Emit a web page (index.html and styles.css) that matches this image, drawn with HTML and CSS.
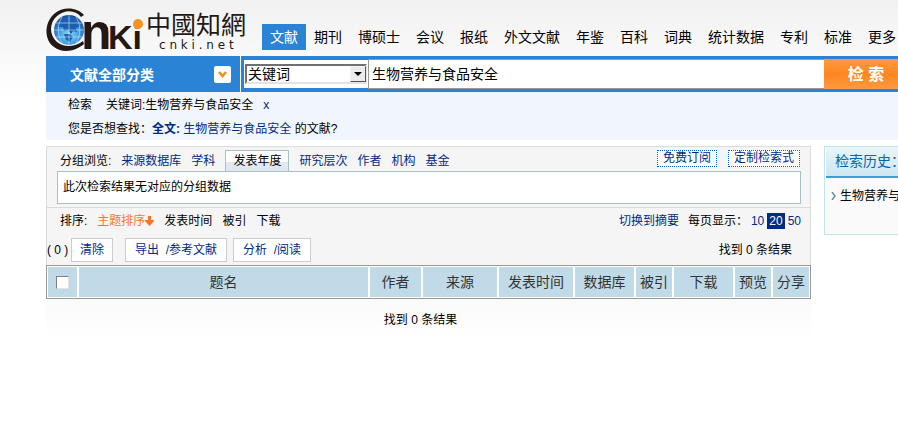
FILE: index.html
```
<!DOCTYPE html>
<html lang="zh-CN">
<head>
    <meta charset="UTF-8">
    <meta name="viewport" content="width=device-width, initial-scale=1.0">
    <title>中国知网 - 文献检索</title>
    <link rel="stylesheet" href="styles.css">
</head>
<body>
    <!-- 顶部 logo 和导航 -->
    <header class="header">
        <a class="logo" href="#" aria-label="中国知网">
            <svg width="202" height="48" viewBox="0 0 202 48">
                <defs>
                    <radialGradient id="globe" cx="0.5" cy="0.65" r="0.65">
                        <stop offset="0" stop-color="#8fdcfb"/>
                        <stop offset="0.5" stop-color="#3f9fe3"/>
                        <stop offset="1" stop-color="#124a9c"/>
                    </radialGradient>
                </defs>
                <path d="M38 8C31 0 17 -1 8 7C-2 16 -2 33 8 40C17 47 30 44 38 37L37 34C29 40 18 41 11 35C3 28 3 16 11 9C19 2 30 3 35 10Z" fill="#231815"/>
                <circle cx="23" cy="23" r="15" fill="url(#globe)"/>
                <path d="M12 17L15 13L20 10L23 13L27 11L32 15L34 19L30 21L31 25L27 24L25 27L22 23L18 24L17 20L13 20ZM18 27L24 27L27 30L24 35L20 33Z" fill="#1c5fb0"/>
                <path d="M8 23H38M10 16H36M10 30H36M23 8V38M16 10C11 18 11 28 16 36M30 10C35 18 35 28 30 36" fill="none" stroke="#d8f0fc" stroke-width="0.700" opacity="0.8"/>
                <text class="logo-k" y="42"><tspan class="logo-n" x="35">n</tspan><tspan x="62">Ki</tspan></text>
                <circle cx="92" cy="17" r="5" fill="#f7931e"/>
                <text class="logo-cn" x="100" y="27">中國知網</text>
                <text class="logo-net" x="113" y="42">c n k i . n e t</text>
            </svg>
        </a>
        <nav class="nav">
            <a class="active" href="#">文献</a>
            <a href="#">期刊</a>
            <a href="#">博硕士</a>
            <a href="#">会议</a>
            <a href="#">报纸</a>
            <a href="#">外文文献</a>
            <a href="#">年鉴</a>
            <a href="#">百科</a>
            <a href="#">词典</a>
            <a href="#">统计数据</a>
            <a href="#">专利</a>
            <a href="#">标准</a>
            <a href="#">更多</a>
        </nav>
    </header>

    <!-- 检索栏 -->
    <form class="search">
        <button class="category" type="button">
            <span>文献全部分类</span>
            <svg width="17" height="17" viewBox="0 0 17 17">
                <rect width="17" height="17" rx="2" fill="#fff"/>
                <path d="M5 6L8.500 10L12 6" fill="none" stroke="#f58a1f" stroke-width="2.500"/>
            </svg>
        </button>
        <div class="search-bar">
            <div class="field">
                <select aria-label="检索字段">
                    <option>关键词</option>
                </select>
                <span class="field-arrow"></span>
            </div>
            <input class="keyword" type="text" value="生物营养与食品安全" aria-label="检索词">
            <button class="search-btn" type="submit">检 索</button>
        </div>
    </form>

    <!-- 检索条件 -->
    <div class="condition">
        <p><span>检索</span><span class="term">关键词:生物营养与食品安全</span><a class="remove" href="#">x</a></p>
        <p>您是否想查找：<a href="#"><b>全文:</b> 生物营养与食品安全</a> 的文献?</p>
    </div>

    <div class="content">
        <main class="main">
            <div class="panel">
                <!-- 分组浏览 -->
                <div class="group">
                    <span>分组浏览:</span>
                    <a href="#">来源数据库</a>
                    <a href="#">学科</a>
                    <a class="current" href="#">发表年度</a>
                    <a href="#">研究层次</a>
                    <a href="#">作者</a>
                    <a href="#">机构</a>
                    <a href="#">基金</a>
                    <div class="group-tools">
                        <a href="#">免费订阅</a>
                        <a href="#">定制检索式</a>
                    </div>
                </div>
                <div class="group-data">此次检索结果无对应的分组数据</div>

                <!-- 排序 -->
                <div class="sort">
                    <span>排序:</span>
                    <a class="by" href="#">主题排序<svg width="9" height="10" viewBox="0 0 9 10"><path d="M3 0H6V4H9V5L4.500 10L0 5V4H3Z" fill="#ff7421"/></svg></a>
                    <a href="#">发表时间</a>
                    <a href="#">被引</a>
                    <a href="#">下载</a>
                    <div class="pages">
                        <a class="switch" href="#">切换到摘要</a>
                        <span>每页显示：</span>
                        <a href="#">10</a>
                        <a class="on" href="#">20</a>
                        <a href="#">50</a>
                    </div>
                </div>

                <!-- 操作按钮 -->
                <div class="actions">
                    <span class="count">( 0 )</span>
                    <button class="clear" type="button">清除</button>
                    <button type="button">导出 &nbsp;/参考文献</button>
                    <button type="button">分析 &nbsp;/阅读</button>
                    <span class="total">找到 0 条结果</span>
                </div>
            </div>

            <table class="result">
                <thead>
                    <tr>
                        <th class="w-check"><input type="checkbox" aria-label="全选"></th>
                        <th>题名</th>
                        <th class="w-author">作者</th>
                        <th class="w-source">来源</th>
                        <th class="w-source">发表时间</th>
                        <th class="w-db">数据库</th>
                        <th class="w-small">被引</th>
                        <th class="w-db">下载</th>
                        <th class="w-small">预览</th>
                        <th class="w-small">分享</th>
                    </tr>
                </thead>
            </table>
            <div class="empty">找到 0 条结果</div>
        </main>

        <!-- 检索历史 -->
        <aside class="history">
            <h2>检索历史：</h2>
            <ul>
                <li>
                    <svg width="5" height="8" viewBox="0 0 5 8"><path d="M1 0L4 4L1 8" fill="none" stroke="#6d8fa3" stroke-width="1.500"/></svg>
                    <a href="#">生物营养与食品安全</a>
                </li>
            </ul>
        </aside>
    </div>
</body>
</html>
```
FILE: styles.css
```
/* 基础样式 */
* {
    box-sizing: border-box;
}

body {
    margin: 0;
    padding-left: 46px;
    background: #fff linear-gradient(#f1f1f2, #fff) no-repeat 0 0 / 100% 100px;
    font-family: "Liberation Sans", "Noto Sans CJK SC", sans-serif;
    font-size: 12px;
    line-height: 16px;
    color: #000;
    overflow-x: hidden;
}

a {
    color: #002b85;
    text-decoration: none;
}

p, h2, ul {
    margin: 0;
    padding: 0;
}

svg {
    display: block;
}

button, input, select {
    margin: 0;
    font-family: inherit;
}

/* 顶部 */
.header {
    display: flex;
    align-items: flex-end;
    gap: 14px;
    height: 56px;
    padding-bottom: 6px;
}

.logo {
    flex: none;
    margin-bottom: -5px;
}

.logo svg {
    overflow: visible;
}

.logo text {
    fill: #231815;
}

.logo-k {
    font-size: 34px;
    font-weight: bold;
}

.logo-n {
    font-size: 50px;
}

.logo-cn {
    font-size: 25px;
}

.logo-net {
    font-family: "DejaVu Sans", sans-serif;
    font-size: 12px;
}

.nav {
    display: flex;
}

.nav a {
    padding: 0 8px;
    font-size: 14px;
    line-height: 26px;
    white-space: nowrap;
    color: #000;
}

.nav .active {
    background: #2a83d4;
    color: #fff;
}

/* 检索栏 */
.search {
    display: flex;
    gap: 1px;
    height: 36px;
}

.category {
    display: flex;
    flex: 0 0 194px;
    align-items: center;
    justify-content: space-between;
    padding: 0 9px 0 24px;
    border: 0;
    background: #2a83d4;
    color: #fff;
    font-size: 14px;
    font-weight: bold;
}

.search-bar {
    display: flex;
    flex: 1;
    align-items: center;
    min-width: 0;
    padding-left: 3px;
    background: #2a83d4;
}

.field {
    position: relative;
    flex: 0 0 124px;
    height: 28px;
    padding: 4px 1px;
    background: #fff;
}

.field select {
    appearance: none;
    display: block;
    width: 100%;
    height: 20px;
    padding: 0 1px;
    border: 2px solid;
    border-color: #707070 #e3e3e3 #e3e3e3 #707070;
    border-radius: 0;
    background: #fff;
    color: #000;
    font-size: 14px;
    line-height: 16px;
}

/* 下拉箭头 */
.field-arrow {
    position: absolute;
    top: 6px;
    right: 2px;
    width: 16px;
    height: 16px;
    border: 1px solid;
    border-color: #f4f4f4 #555 #555 #f4f4f4;
    background: #ececec;
    pointer-events: none;
}

.field-arrow::after {
    content: "";
    position: absolute;
    top: 5px;
    left: 3px;
    border: 4px solid transparent;
    border-top-color: #000;
    border-bottom: 0;
}

.keyword {
    flex: 1;
    min-width: 0;
    height: 30px;
    padding: 0 3px 2px;
    border: 1px solid #999;
    border-right: 0;
    border-radius: 0;
    background: #fff;
    color: #000;
    font-size: 14px;
}

.search-btn {
    flex: 0 0 74px;
    height: 30px;
    padding: 0 0 2px 10px;
    border: 0;
    background: linear-gradient(#ff9a40, #ff8620 50%, #ff9a40);
    color: #fff;
    font-size: 16px;
    font-weight: bold;
}

/* 检索条件 */
.condition {
    height: 48px;
    padding: 1px 22px 0;
    background: #f1f6fd;
}

.condition p {
    line-height: 24px;
}

.term {
    margin: 0 10px 0 14px;
}

/* 内容区 */
.content {
    display: flex;
    align-items: flex-start;
    gap: 13px;
    padding-top: 6px;
}

.main {
    flex: 1;
    min-width: 0;
}

.panel {
    border: 1px solid #dcdcdc;
    border-bottom: 0;
    background: #f5f5f5;
}

.group {
    display: flex;
    align-items: flex-end;
    gap: 10px;
    height: 24px;
    padding: 0 10px 0 13px;
    line-height: 20px;
}

.group .current {
    padding: 0 7px;
    border: 1px solid #a5c3c7;
    border-bottom: 0;
    background: linear-gradient(#fff 55%, #e2e8f0 55%);
    color: #000;
}

.group-tools {
    display: flex;
    gap: 11px;
    margin-left: auto;
    padding-bottom: 4px;
}

.group-tools a {
    padding: 0 5px;
    border: 1px dotted #0066cc;
    background: #fff;
    line-height: 15px;
}

.group-data {
    height: 33px;
    margin: 0 9px 3px 10px;
    padding: 0 5px;
    border: 1px solid #a5c3c7;
    background: #fff;
    line-height: 30px;
}

.sort {
    display: flex;
    align-items: center;
    gap: 10px;
    height: 26px;
    padding: 0 8px 0 13px;
    border-top: 1px solid #dcdcdc;
}

.sort a {
    color: #000;
}

.sort .by {
    display: flex;
    align-items: center;
    color: #ff7421;
}

.pages {
    display: flex;
    gap: 2px;
    margin-left: auto;
}

.pages a {
    padding: 0 1px;
    color: #002b85;
}

.pages .switch {
    margin-right: 6px;
}

.pages .on {
    padding: 0 2px;
    background: #002b85;
    color: #fff;
}

.actions {
    display: flex;
    align-items: center;
    gap: 6px;
    height: 32px;
    padding: 2px 18px 0 0;
}

.count {
    width: 18px;
    white-space: nowrap;
}

.actions button {
    height: 24px;
    padding: 0 9px;
    border: 1px solid #ccc;
    background: #fff;
    color: #002b85;
    font-size: 12px;
    line-height: 16px;
    white-space: nowrap;
}

.actions .clear {
    margin-right: 6px;
    padding: 0 8px;
}

.total {
    margin-left: auto;
}

/* 结果表格 */
.result {
    width: 100%;
    border: 1px solid #999;
    border-spacing: 0;
    table-layout: fixed;
}

.result th {
    height: 32px;
    padding: 0;
    border: 1px solid #fff;
    background: #c1dae7;
    color: #333;
    font-size: 14px;
    font-weight: normal;
}

.result input {
    appearance: none;
    display: block;
    width: 13px;
    height: 13px;
    margin: 0 auto;
    border: 1px solid;
    border-color: #808080 #e3e3e3 #e3e3e3 #808080;
    background: #fff;
}

.w-check {
    width: 31px;
}

.w-author {
    width: 53px;
}

.w-source {
    width: 76px;
}

.w-db {
    width: 61px;
}

.w-small {
    width: 38px;
}

.empty {
    height: 42px;
    padding-right: 16px;
    background: linear-gradient(#fafafa, #fff);
    line-height: 42px;
    text-align: center;
}

/* 检索历史 */
.history {
    flex: 0 0 74px;
    height: 89px;
    border: 1px solid #c1e4ef;
    border-right: 0;
    background: #fafafa;
    overflow: hidden;
    white-space: nowrap;
}

.history h2 {
    margin-left: 1px;
    padding-left: 9px;
    border-bottom: 2px solid #3aa0d5;
    background: linear-gradient(#eaf5f9, #cde7f1);
    color: #0066a8;
    font-size: 14px;
    font-weight: normal;
    line-height: 29px;
}

.history ul {
    padding: 10px 6px;
    list-style: none;
}

.history li {
    display: flex;
    align-items: center;
    gap: 4px;
}

.history svg {
    flex: none;
}

.history a {
    color: #000;
}
```
